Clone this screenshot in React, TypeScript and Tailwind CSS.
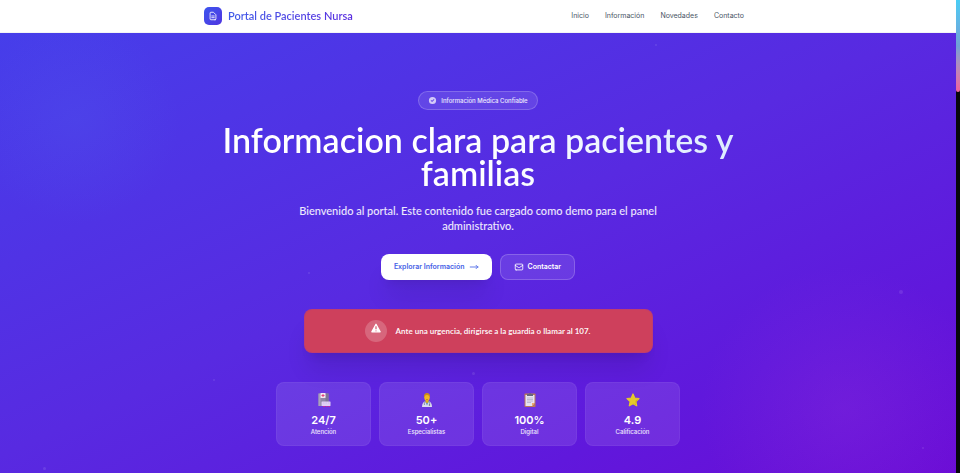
import type { ReactNode } from 'react';

const NAV = [
  { label: 'Inicio', href: '#inicio' },
  { label: 'Información', href: '#informacion' },
  { label: 'Novedades', href: '#novedades' },
  { label: 'Contacto', href: '#contacto' },
];

function OutlineIcon({ d }: { d: string }) {
  return (
    <svg viewBox="0 0 24 24" className="size-[10px]" fill="none" stroke="currentColor" strokeWidth="2" strokeLinecap="round" strokeLinejoin="round" aria-hidden="true">
      <path d={d} />
    </svg>
  );
}

function HospitalIcon() {
  return (
    <svg viewBox="0 0 28 28" className="size-[14px]" aria-hidden="true">
      <path d="M3 1h20v25H3z" fill="#8f87a8" />
      <path d="M3 1h4v25H3z" fill="#a9a1bd" />
      <path d="M17 1h6v17h-6z" fill="#7d7597" />
      <rect x="7" y="0" width="10" height="10" rx="1" fill="#f3e6f2" />
      <path d="M11 2h2v2h2v2h-2v2h-2v-2h-2v-2h2z" fill="#e0447c" />
      <rect x="9" y="17" width="18" height="9" rx="1" fill="#dfcff5" />
      <path d="M12 19h3v2h-3zM17 19h3v2h-3zM22 19h3v2h-3z" fill="#d0bff0" />
      <path d="M12 26h4v2h-4zM18 26h3v2h-3zM23 26h3v2h-3z" fill="#c32a9b" />
    </svg>
  );
}

function DoctorIcon() {
  return (
    <svg viewBox="0 0 28 28" className="size-[14px]" aria-hidden="true">
      <path d="M4 28c0-7 3-11 7-12h6c4 1 7 5 7 12z" fill="#dcdcee" />
      <path d="M10 16h8l-4 9z" fill="#5b8fd0" />
      <path d="M11 14h6v4l-3 3-3-3z" fill="#e0a81d" />
      <path d="M10 17c-1 3-2 4-1 7M18 17c1 3 2 4 1 6" stroke="#5d6478" strokeWidth="1.300" fill="none" />
      <circle cx="19" cy="24" r="1.500" fill="#5d6478" />
      <ellipse cx="14" cy="8.500" rx="5.500" ry="7" fill="#f2b822" />
      <path d="M8 9c-1-6 2-9 6-9s7 3 6 9c-1-3-3-5-6-5s-5 2-6 5z" fill="#c98a1a" />
      <path d="M12 12.500c1 1 3 1 4 0" stroke="#8a5a12" fill="none" />
    </svg>
  );
}

function ClipboardIcon() {
  return (
    <svg viewBox="0 0 28 28" className="size-[14px]" aria-hidden="true">
      <rect x="3" y="1" width="22" height="27" rx="1.500" fill="#b9785a" />
      <path d="M5 4h18v16l-5 6H5z" fill="#e6e2f2" />
      <path d="M23 20l-5 6v-6z" fill="#f0a868" />
      <path d="M8 10h12M8 13h12M8 16h12M8 19h8" stroke="#aaa4c4" strokeWidth="1.300" />
      <path d="M8 2h4a2 2 0 0 1 4 0h4v4H8z" fill="#68647c" />
    </svg>
  );
}

function StarIcon() {
  return (
    <svg viewBox="0 0 28 28" className="size-[14px]" aria-hidden="true">
      <path
        d="M14 2l3.500 8 8.500 1-6.300 6 1.700 8.500L14 21.600l-7.400 3.900 1.700-8.500-6.300-6 8.500-1z"
        fill="#e5c92b" stroke="#e5c92b" strokeWidth="2.500" strokeLinejoin="round"
      />
      <path d="M24 12l-5 4 1 8-6-3 5 1z" fill="#cfae1c" />
    </svg>
  );
}

const STATS: { icon: ReactNode; value: string; label: string }[] = [
  { icon: <HospitalIcon />, value: '24/7', label: 'Atención' },
  { icon: <DoctorIcon />, value: '50+', label: 'Especialistas' },
  { icon: <ClipboardIcon />, value: '100%', label: 'Digital' },
  { icon: <StarIcon />, value: '4.9', label: 'Calificación' },
];

// Floating specks, as percentages of the hero
const PARTICLES = [
  { left: 32.2, top: 54.3, size: 2 },
  { left: 94, top: 58.4, size: 4 },
  { left: 49.4, top: 77, size: 3 },
  { left: 22.3, top: 78.6, size: 2 },
  { left: 4.5, top: 98.6, size: 3 },
  { left: 68.5, top: 2.4, size: 2 },
  { left: 96.4, top: 94, size: 2 },
];

function Header() {
  return (
    <header className="border-b border-gray-100 bg-white">
      <div className="mx-auto flex h-8 max-w-[548px] items-center justify-between">
        <a href="#inicio" className="flex items-center gap-1.5">
          <span className="flex size-[18px] items-center justify-center rounded-[5px] bg-gradient-to-br from-[#3b55ee] to-[#4f35e0] text-white">
            <OutlineIcon d="M9 12h6m-6 4h6m2 5H7a2 2 0 01-2-2V5a2 2 0 012-2h5.586a1 1 0 01.707.293l5.414 5.414a1 1 0 01.293.707V19a2 2 0 01-2 2z" />
          </span>
          <span className="bg-gradient-to-r from-[#3f5ce8] to-[#5a2ce0] bg-clip-text font-['Lato','Noto_Sans',sans-serif] text-[11px] font-semibold text-transparent">
            Portal de Pacientes Nursa
          </span>
        </a>
        <nav className="flex text-[7px] text-gray-600">
          {NAV.map(n => (
            <a key={n.label} href={n.href} className="px-2 py-1">{n.label}</a>
          ))}
        </nav>
      </div>
    </header>
  );
}

function Hero() {
  return (
    <section
      id="inicio"
      className="relative flex flex-1 flex-col items-center overflow-hidden bg-[linear-gradient(to_bottom_right,#463eea_0%,#582ae1_48%,#6018dc_78%,#6b0cd6_100%)] px-4 pt-[58px] pb-6 text-center text-white"
    >
      {/* Background glows */}
      <div className="absolute -top-4 -left-7 size-52 rounded-full bg-[radial-gradient(circle,rgba(80,92,236,0.25)_0%,transparent_70%)]" />
      <div className="absolute -right-8 -bottom-20 size-72 rounded-full bg-[radial-gradient(circle,rgba(140,50,220,0.3)_0%,transparent_70%)]" />
      {PARTICLES.map(p => (
        <span
          key={p.left}
          className="absolute rounded-full bg-white/10"
          style={{ left: `${p.left}%`, top: `${p.top}%`, width: p.size, height: p.size }}
        />
      ))}

      <div className="relative flex h-[19px] items-center gap-1 rounded-full border border-white/20 bg-white/10 px-[9px] text-[6px] font-medium text-white/90">
        <svg viewBox="0 0 20 20" className="size-[9px]" fill="currentColor" opacity="0.8" aria-hidden="true">
          <path
            fillRule="evenodd" clipRule="evenodd"
            d="M10 18a8 8 0 100-16 8 8 0 000 16zm3.707-9.293a1 1 0 00-1.414-1.414L9 10.586 7.707 9.293a1 1 0 00-1.414 1.414l2 2a1 1 0 001.414 0l4-4z"
          />
        </svg>
        Información Médica Confiable
      </div>

      <h1 className="relative mt-[13px] max-w-[548px] bg-gradient-to-r from-white via-white to-blue-100 bg-clip-text font-['Lato','Noto_Sans',sans-serif] text-[34px] leading-[33px] font-semibold text-transparent">
        Informacion clara para pacientes y familias
      </h1>

      <p className="relative mt-[14px] max-w-96 font-['Lato','Noto_Sans',sans-serif] text-[11px] leading-[15px] font-medium text-white/90">
        Bienvenido al portal. Este contenido fue cargado como demo para el panel administrativo.
      </p>

      <div className="relative mt-[21px] flex items-center gap-2 text-[7px] font-semibold">
        <a href="#informacion" className="flex h-[26px] items-center gap-1 rounded-lg bg-white px-[13px] text-[#4560e6] shadow-xl">
          Explorar Información
          <OutlineIcon d="M17 8l4 4m0 0l-4 4m4-4H3" />
        </a>
        <a href="#contacto" className="flex h-[26px] items-center gap-1 rounded-lg border border-white/20 bg-white/10 px-[13px]">
          <OutlineIcon d="M3 8l7.890 5.260a2 2 0 002.220 0L21 8M5 19h14a2 2 0 002-2V7a2 2 0 00-2-2H5a2 2 0 00-2 2v10a2 2 0 002 2z" />
          Contactar
        </a>
      </div>

      {/* Emergency notice */}
      <div role="alert" className="relative mt-[29px] flex h-11 w-full max-w-[349px] items-center justify-center gap-2 rounded-lg border border-[#b83a7c]/60 bg-[#ce405c] font-['Lato','Noto_Sans',sans-serif] text-[8px] font-bold shadow-xl">
        <span className="flex size-[22px] justify-center rounded-full bg-white/20 pt-[3px]">
          <svg viewBox="0 0 24 24" className="size-[10px]" aria-hidden="true">
            <path d="M12 3L22 21H2z" fill="white" stroke="white" strokeWidth="3" strokeLinejoin="round" />
            <path d="M12 8v7M12 18v2" stroke="#ce405c" strokeWidth="2.500" />
          </svg>
        </span>
        <p className="text-white/95">Ante una urgencia, dirigirse a la guardia o llamar al 107.</p>
      </div>

      <div className="relative mt-[29px] grid w-full max-w-[404px] grid-cols-4 gap-2">
        {STATS.map(s => (
          <div key={s.label} className="flex h-16 flex-col items-center rounded-lg border border-white/5 bg-white/10 pt-[10px]">
            {s.icon}
            <div className="mt-[6px] text-[11px] leading-[14px] font-semibold">{s.value}</div>
            <div className="text-[6px] leading-[9px] font-medium text-white/90">{s.label}</div>
          </div>
        ))}
      </div>
    </section>
  );
}

export default function App() {
  return (
    <div className="flex min-h-screen bg-[#08080c] font-['Inter','Noto_Sans',sans-serif]">
      <main className="flex min-w-0 flex-1 flex-col">
        <Header />
        <Hero />
      </main>
      {/* Page scroll indicator */}
      <div className="w-1">
        <div className="h-[92px] rounded-b-xs bg-gradient-to-b from-[#48cdf5] via-[#6fa0d6] to-[#f0609c]" />
      </div>
    </div>
  );
}
